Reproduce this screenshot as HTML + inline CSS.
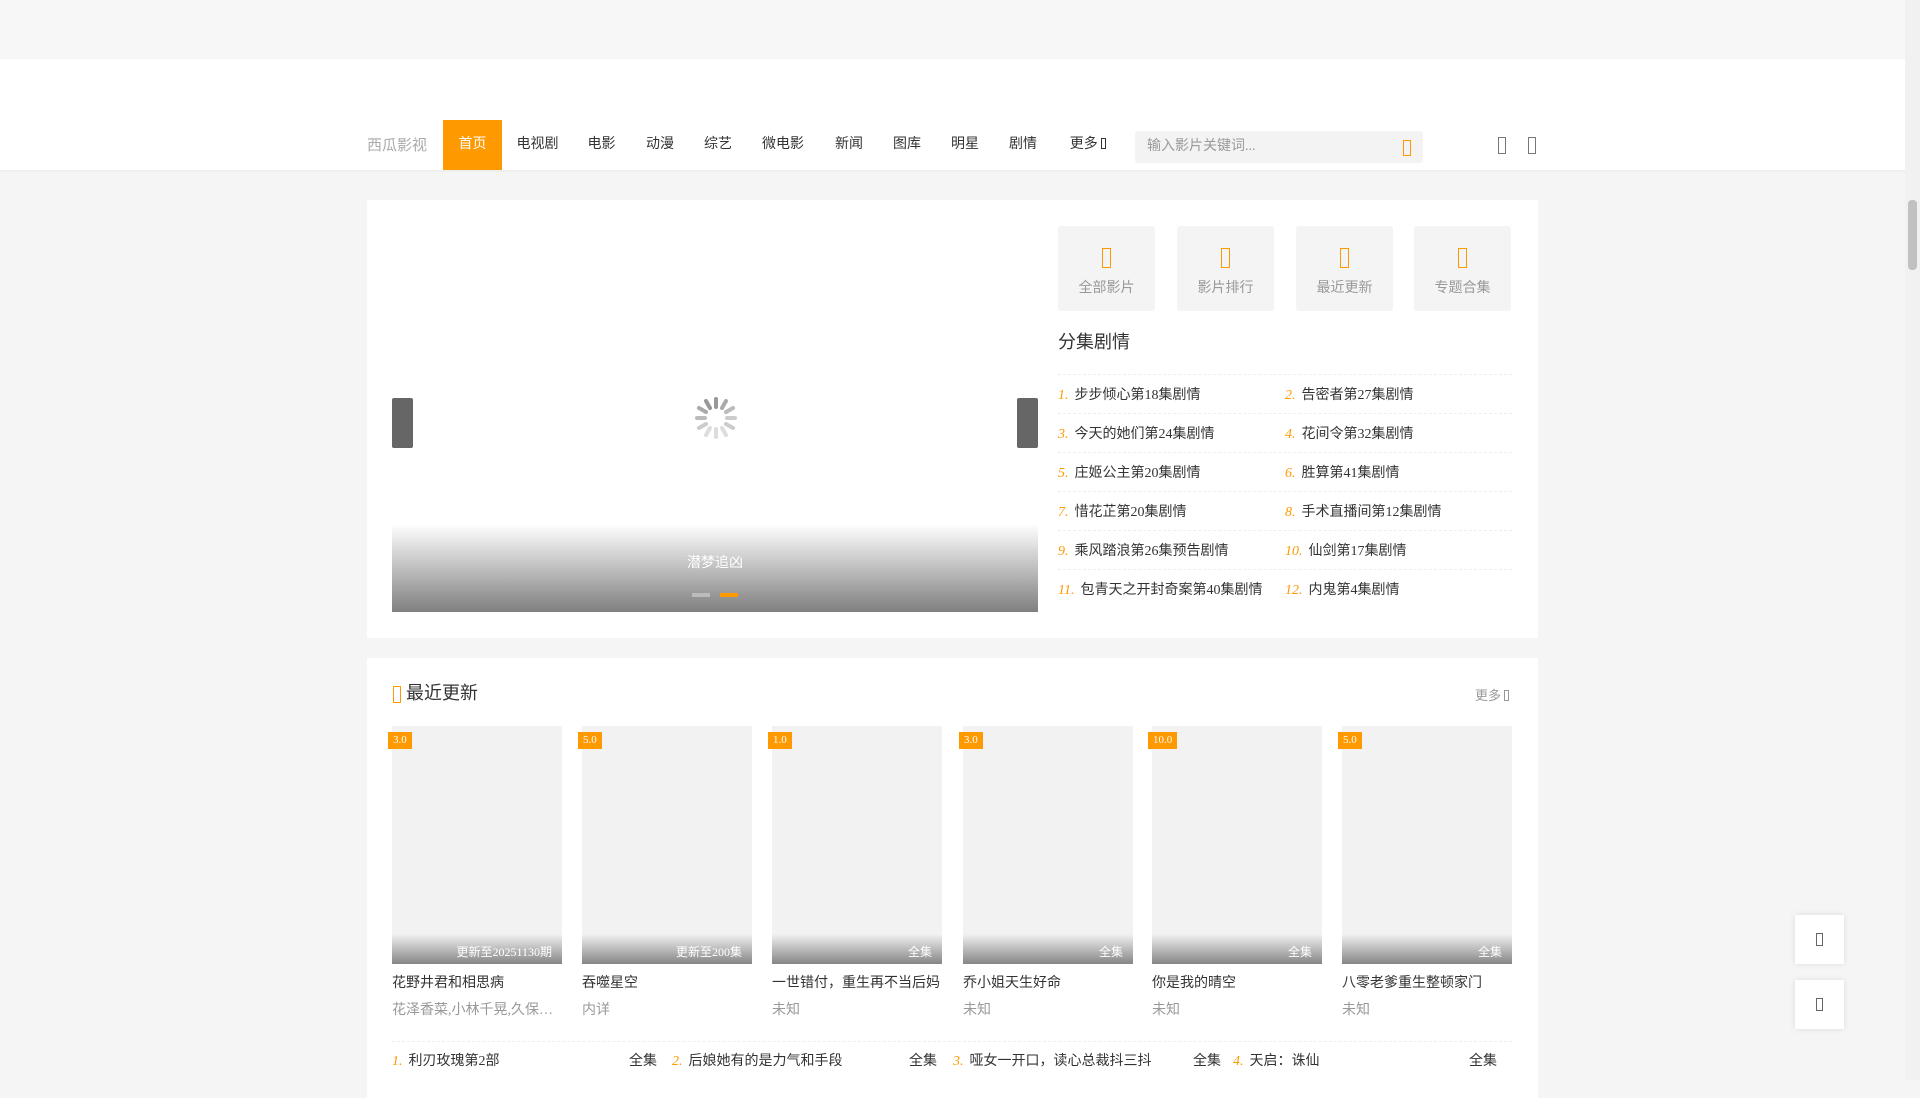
<!DOCTYPE html>
<html><head><meta charset="utf-8"><style>
*{margin:0;padding:0;box-sizing:border-box}
body{width:1920px;height:1080px;overflow:hidden;background:#f5f5f5;font-family:"Liberation Serif","Noto Sans CJK SC",serif;font-size:14px;color:#333;position:relative}
.top{height:59px;background:#f7f7f7}
.hd{height:111px;background:#fff;position:relative;box-shadow:0 1px 3px rgba(0,0,0,.05)}
.abs{position:absolute}
.logo{left:367px;top:134px;font-size:15px;color:#aaa}
.nav a{position:absolute;top:120px;height:50px;line-height:50px;font-size:14px;color:#333;text-align:center}
.nav a.on{background:#ff9900;color:#fff}
.search{left:1135px;top:131px;width:288px;height:32px;background:#f3f3f3;border-radius:3px;color:#999;font-size:14px;line-height:32px;padding-left:12px}
.box{display:inline-block;border:1.5px solid currentColor;}
.sb{position:absolute;right:0;top:0;width:15px;height:1080px;background:#f1f1f1}
.sb i{position:absolute;left:3px;top:200px;width:9px;height:70px;background:#c1c1c1;border-radius:4px}
.panel{position:absolute;left:367px;width:1171px;background:#fff}
.slide{left:392px;top:226px;width:646px;height:386px;background:#fff}
.cap{left:0;bottom:0;width:646px;height:88px;background:linear-gradient(rgba(0,0,0,0),rgba(0,0,0,.5))}
.arr{width:21px;height:50px;background:#666;border-radius:2px;top:172px}
.tile{top:226px;width:97px;height:85px;background:#f4f4f4;border-radius:3px;text-align:center;color:#999;font-size:14px}
.tile .box{color:#ff9900;width:9px;height:20px;margin-top:22px}
.ep{left:1058px;width:454px;}
.ep div{position:absolute;font-size:14px;color:#333;white-space:nowrap}
.ep i{color:#ff9900;font-style:italic;margin-right:6px}
.line{position:absolute;height:0;border-top:1px dashed #eee}
.card{top:726px;width:170px;height:238px;background:#f2f2f2}
.card .g{position:absolute;left:0;bottom:0;width:100%;height:30px;background:linear-gradient(rgba(0,0,0,0),rgba(0,0,0,.45));color:#fff;font-size:12px;text-align:right;padding-right:10px;line-height:36px}
.badge{position:absolute;top:732px;height:17px;background:#ff9900;color:#fff;font-size:11px;line-height:17px;padding:0 5px}
.t1{top:972px;font-size:14px;color:#333;width:170px;white-space:nowrap;overflow:hidden}
.t2{top:999px;font-size:14px;color:#999;width:170px;white-space:nowrap}
.bl{top:1050px;font-size:14px;color:#333;white-space:nowrap}
.bl i{color:#ff9900;font-style:italic;margin-right:6px}
.fb{left:1795px;width:49px;height:49px;background:#fff;box-shadow:0 0 6px rgba(0,0,0,.1);text-align:center}
.fb .box{width:7px;height:13px;color:#666;margin-top:18px}
</style></head><body>
<div class="top"></div>
<div class="hd"></div>
<div class="abs logo">西瓜影视</div>
<div class="nav">
<a class="on" style="left:443px;width:59px">首页</a>
<a style="left:502px;width:71px">电视剧</a>
<a style="left:573px;width:57px">电影</a>
<a style="left:631px;width:58px">动漫</a>
<a style="left:689px;width:58px">综艺</a>
<a style="left:747px;width:72px">微电影</a>
<a style="left:820px;width:58px">新闻</a>
<a style="left:878px;width:58px">图库</a>
<a style="left:936px;width:58px">明星</a>
<a style="left:994px;width:58px">剧情</a>
<a style="left:1052px;width:72px">更多 <span class="box" style="width:5px;height:11px;vertical-align:-1px"></span></a>
</div>
<div class="abs search">输入影片关键词...<span class="box" style="position:absolute;left:268px;top:9px;width:8px;height:16px;color:#ff9900"></span></div>
<span class="abs box" style="left:1498px;top:137px;width:8px;height:17px;color:#777"></span>
<span class="abs box" style="left:1528px;top:137px;width:8px;height:17px;color:#777"></span>

<div class="panel" style="top:200px;height:438px"></div>
<div class="abs slide">
 <div class="abs cap"></div>
 <div class="abs arr" style="left:0"></div>
 <div class="abs arr" style="right:0"></div>
 <svg class="abs" style="left:302px;top:170px" width="44" height="44" viewBox="-22 -22 44 44">
  <g stroke-linecap="round" stroke-width="4">
  <line x1="0" y1="-11" x2="0" y2="-19" stroke="#999"/>
  <line x1="6" y1="-10" x2="10" y2="-17" stroke="#aaa"/>
  <line x1="10" y1="-6" x2="17" y2="-10" stroke="#bbb"/>
  <line x1="11" y1="0" x2="19" y2="0" stroke="#ccc"/>
  <line x1="10" y1="6" x2="17" y2="10" stroke="#ccc"/>
  <line x1="6" y1="10" x2="10" y2="17" stroke="#ddd"/>
  <line x1="0" y1="11" x2="0" y2="19" stroke="#ddd"/>
  <line x1="-6" y1="10" x2="-10" y2="17" stroke="#ddd"/>
  <line x1="-10" y1="6" x2="-17" y2="10" stroke="#ccc"/>
  <line x1="-11" y1="0" x2="-19" y2="0" stroke="#bbb"/>
  <line x1="-10" y1="-6" x2="-17" y2="-10" stroke="#aaa"/>
  <line x1="-6" y1="-10" x2="-10" y2="-17" stroke="#999"/>
  </g></svg>
 <div class="abs" style="left:0;width:646px;top:326px;text-align:center;color:#fff;font-size:14px">潜梦追凶</div>
 <div class="abs" style="left:300px;top:367px;width:18px;height:4px;background:#bbb"></div>
 <div class="abs" style="left:328px;top:367px;width:18px;height:4px;background:#ff9900"></div>
</div>
<div class="abs tile" style="left:1058px"><span class="box"></span><div style="margin-top:4px">全部影片</div></div>
<div class="abs tile" style="left:1177px"><span class="box"></span><div style="margin-top:4px">影片排行</div></div>
<div class="abs tile" style="left:1296px"><span class="box"></span><div style="margin-top:4px">最近更新</div></div>
<div class="abs tile" style="left:1414px"><span class="box"></span><div style="margin-top:4px">专题合集</div></div>
<div class="abs" style="left:1058px;top:328px;font-size:18px;color:#333">分集剧情</div>
<div class="abs ep" style="top:0">
<span class="line" style="left:0;width:454px;top:374px"></span>
<span class="line" style="left:0;width:454px;top:413px"></span>
<span class="line" style="left:0;width:454px;top:452px"></span>
<span class="line" style="left:0;width:454px;top:491px"></span>
<span class="line" style="left:0;width:454px;top:530px"></span>
<span class="line" style="left:0;width:454px;top:569px"></span>
<div style="left:0;top:384px"><i>1.</i>步步倾心第18集剧情</div>
<div style="left:227px;top:384px"><i>2.</i>告密者第27集剧情</div>
<div style="left:0;top:423px"><i>3.</i>今天的她们第24集剧情</div>
<div style="left:227px;top:423px"><i>4.</i>花间令第32集剧情</div>
<div style="left:0;top:462px"><i>5.</i>庄姬公主第20集剧情</div>
<div style="left:227px;top:462px"><i>6.</i>胜算第41集剧情</div>
<div style="left:0;top:501px"><i>7.</i>惜花芷第20集剧情</div>
<div style="left:227px;top:501px"><i>8.</i>手术直播间第12集剧情</div>
<div style="left:0;top:540px"><i>9.</i>乘风踏浪第26集预告剧情</div>
<div style="left:227px;top:540px"><i>10.</i>仙剑第17集剧情</div>
<div style="left:0;top:579px"><i>11.</i>包青天之开封奇案第40集剧情</div>
<div style="left:227px;top:579px"><i>12.</i>内鬼第4集剧情</div>
</div>

<div class="panel" style="top:658px;height:440px"></div>
<span class="abs box" style="left:393px;top:686px;width:8px;height:17px;color:#ff9900"></span>
<div class="abs" style="left:406px;top:679px;font-size:18px;color:#333">最近更新</div>
<div class="abs" style="left:1475px;top:685px;font-size:13px;color:#999">更多 <span class="box" style="width:5px;height:11px;vertical-align:-1px"></span></div>

<div class="abs card" style="left:392px"><div class="g">更新至20251130期</div></div>
<div class="abs card" style="left:582px"><div class="g">更新至200集</div></div>
<div class="abs card" style="left:772px"><div class="g">全集</div></div>
<div class="abs card" style="left:963px"><div class="g">全集</div></div>
<div class="abs card" style="left:1152px"><div class="g">全集</div></div>
<div class="abs card" style="left:1342px"><div class="g">全集</div></div>
<div class="badge" style="left:388px">3.0</div>
<div class="badge" style="left:578px">5.0</div>
<div class="badge" style="left:768px">1.0</div>
<div class="badge" style="left:959px">3.0</div>
<div class="badge" style="left:1148px">10.0</div>
<div class="badge" style="left:1338px">5.0</div>
<div class="abs t1" style="left:392px">花野井君和相思病</div>
<div class="abs t1" style="left:582px">吞噬星空</div>
<div class="abs t1" style="left:772px">一世错付，重生再不当后妈</div>
<div class="abs t1" style="left:963px">乔小姐天生好命</div>
<div class="abs t1" style="left:1152px">你是我的晴空</div>
<div class="abs t1" style="left:1342px">八零老爹重生整顿家门</div>
<div class="abs t2" style="left:392px">花泽香菜,小林千晃,久保…</div>
<div class="abs t2" style="left:582px">内详</div>
<div class="abs t2" style="left:772px">未知</div>
<div class="abs t2" style="left:963px">未知</div>
<div class="abs t2" style="left:1152px">未知</div>
<div class="abs t2" style="left:1342px">未知</div>
<span class="line" style="left:392px;width:1120px;top:1041px"></span>
<div class="abs bl" style="left:392px"><i>1.</i>利刃玫瑰第2部</div><div class="abs bl" style="left:629px">全集</div>
<div class="abs bl" style="left:672px"><i>2.</i>后娘她有的是力气和手段</div><div class="abs bl" style="left:909px">全集</div>
<div class="abs bl" style="left:953px"><i>3.</i>哑女一开口，读心总裁抖三抖</div><div class="abs bl" style="left:1189px;background:#fff;padding-left:4px">全集</div>
<div class="abs bl" style="left:1233px"><i>4.</i>天启：诛仙</div><div class="abs bl" style="left:1469px">全集</div>

<div class="abs fb" style="top:915px"><span class="box"></span></div>
<div class="abs fb" style="top:980px"><span class="box"></span></div>
<div class="sb"><i></i></div>
</body></html>
